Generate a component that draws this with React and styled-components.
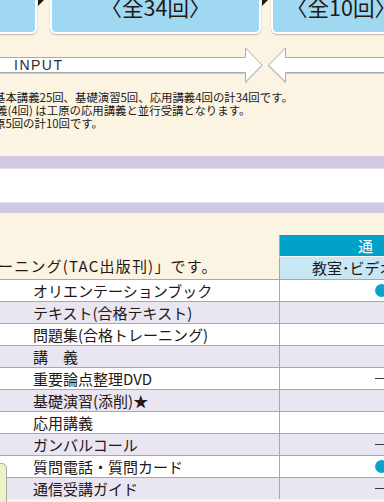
import React from "react";
import styled, { createGlobalStyle } from "styled-components";

const Global = createGlobalStyle`
  html, body { margin: 0; padding: 0; }
  body {
    width: 384px; height: 502px; overflow: hidden;
    background: #fcf4e3;
    font-family: "Noto Sans CJK JP", "Noto Sans", sans-serif;
    color: #231815;
  }
`;

const Page = styled.div`
  position: relative;
  width: 384px;
  height: 502px;
  overflow: hidden;
  background: #fcf4e3;
`;

const TopRow = styled.div`
  display: flex;
  align-items: flex-start;
  height: 34px;
`;

const StepBox = styled.div`
  flex: 0 0 ${(p) => p.$w}px;
  margin-left: ${(p) => p.$ml || 0}px;
  height: 34px;
  box-sizing: border-box;
  background: #a0d8f2;
  border: 2px solid #fff;
  border-top: none;
  border-radius: 0 0 6px 6px;
  box-shadow: 0 1px 1.5px rgba(0, 0, 0, 0.25);
  display: flex;
  justify-content: center;
  align-items: flex-start;
  overflow: hidden;
`;

const StepText = styled.span`
  font-size: 21.5px;
  line-height: 21px;
  margin-top: -4px;
  color: #231815;
  white-space: nowrap;
`;

const Connector = styled.div`
  flex: 0 0 ${(p) => p.$w}px;
  height: 34px;
  display: flex;
  justify-content: flex-start;
`;

const ArrowRow = styled.div`
  position: relative;
  height: 42px;
  margin-top: 10px;
`;

const ArrowLabel = styled.span`
  position: absolute;
  left: 14px;
  top: 13px;
  font-family: "Liberation Sans", Arial, sans-serif;
  font-size: 14px;
  line-height: 16px;
  letter-spacing: 1.5px;
  color: #2e2e2e;
`;

const Notes = styled.div`
  margin-top: 5px;
  font-size: 11.4px;
  line-height: 13px;
  color: #231815;
  white-space: nowrap;
`;

const NoteLine = styled.div`
  margin-left: ${(p) => p.$indent}px;
`;

const Band = styled.div`
  margin-top: 26px;
  display: flex;
  flex-direction: column;
`;

const Stripe = styled.div`
  height: ${(p) => p.$h}px;
  background: ${(p) => p.$bg};
  border-top: ${(p) => (p.$edge ? "1px solid #e4def0" : "none")};
  box-sizing: border-box;
`;

const Table = styled.div`
  margin-top: 22px;
  display: flex;
  flex-direction: column;
`;

const Row = styled.div`
  display: grid;
  grid-template-columns: 279px 1fr;
  height: 22px;
  box-sizing: border-box;
  background: ${(p) => (p.$alt ? "#e9e5f1" : "#ffffff")};
  border-top: 1px solid #a2a9b1;
`;

const HeadRow = styled.div`
  display: grid;
  grid-template-columns: 279px 1fr;
  height: 22px;
`;

const Lead = styled.div`
  font-size: 15px;
  line-height: 22px;
  letter-spacing: 1.2px;
  white-space: nowrap;
  margin-left: -2px;
  margin-top: -2px;
`;

const HeadCell = styled.div`
  border-left: 1px solid #a2a9b1;
  background: ${(p) => p.$bg};
  color: ${(p) => p.$color};
  border-bottom: ${(p) => (p.$split ? "1px solid #fff" : "none")};
  box-sizing: border-box;
  padding-left: ${(p) => p.$pad}px;
  font-size: 15px;
  line-height: 21px;
  white-space: nowrap;
  overflow: hidden;
`;

const Label = styled.div`
  padding-left: 33px;
  font-size: 15px;
  line-height: 21px;
  white-space: nowrap;
  color: #231815;
`;

const MarkCell = styled.div`
  border-left: 1px solid #a2a9b1;
  display: flex;
  align-items: center;
  padding-left: 95px;
`;

const Dot = styled.span`
  flex: 0 0 13px;
  width: 13px;
  height: 13px;
  border-radius: 50%;
  background: #0aa3cf;
`;

const Dash = styled.span`
  flex: 0 0 14px;
  width: 14px;
  height: 1.5px;
  background: #3a3a3a;
`;

const SideTab = styled.div`
  position: absolute;
  left: -2px;
  top: 463px;
  width: 9px;
  height: 50px;
  box-sizing: border-box;
  background: #eef2c8;
  border: 1px solid #a9ad9c;
  border-radius: 0 5px 0 0;
`;

const Tip = () => (
  <svg width="8" height="7" viewBox="0 0 8 7">
    <polygon points="1,0 7,0 1,6" fill="#231815" />
  </svg>
);

const rows = [
  { label: "オリエンテーションブック", mark: "dot" },
  { label: "テキスト(合格テキスト)" },
  { label: "問題集(合格トレーニング)" },
  { label: "講　義" },
  { label: "重要論点整理DVD", mark: "dash" },
  { label: "基礎演習(添削)★" },
  { label: "応用講義" },
  { label: "ガンバルコール", mark: "dash" },
  { label: "質問電話・質問カード", mark: "dot" },
  { label: "通信受講ガイド", mark: "dash" },
];

export default function App() {
  return (
    <Page>
      <Global />
      <TopRow>
        <StepBox $w={57} $ml={-20} />
        <Connector $w={13}>
          <Tip />
        </Connector>
        <StepBox $w={211}>
          <StepText>〈全34回〉</StepText>
        </StepBox>
        <Connector $w={10}>
          <Tip />
        </Connector>
        <StepBox $w={140}>
          <StepText>〈全10回〉</StepText>
        </StepBox>
      </TopRow>

      <ArrowRow>
        <svg width="384" height="42" viewBox="0 0 384 42">
          <defs>
            <filter id="sh" x="-5%" y="-20%" width="110%" height="140%">
              <feDropShadow dx="0" dy="1" stdDeviation="0.6" floodColor="#000" floodOpacity="0.18" />
            </filter>
          </defs>
          <path
            d="M -4 13.5 H 245.5 V 4 L 262 21 L 245.5 38 V 28.5 H -4 Z"
            fill="#fff"
            stroke="#a3abb3"
            strokeWidth="1"
            filter="url(#sh)"
          />
          <path
            d="M 390 13.5 H 285.5 V 4 L 268.5 21 L 285.5 38 V 28.5 H 390 Z"
            fill="#fff"
            stroke="#a3abb3"
            strokeWidth="1"
            filter="url(#sh)"
          />
        </svg>
        <ArrowLabel>INPUT</ArrowLabel>
      </ArrowRow>

      <Notes>
        <NoteLine $indent={-6}>基本講義25回、基礎演習5回、応用講義4回の計34回です。</NoteLine>
        <NoteLine $indent={-4}>義(4回) は工原の応用講義と並行受講となります。</NoteLine>
        <NoteLine $indent={-6}>原5回の計10回です。</NoteLine>
      </Notes>

      <Band>
        <Stripe $h={12} $bg="#d1c9e2" />
        <Stripe $h={34} $bg="#ffffff" $edge />
        <Stripe $h={11} $bg="#d1c9e2" $edge />
      </Band>

      <Table>
        <HeadRow>
          <div />
          <HeadCell $bg="#00a2c9" $color="#fff" $pad={78} $split>
            通　信
          </HeadCell>
        </HeadRow>
        <HeadRow>
          <Lead>ーニング(TAC出版刊)」です。</Lead>
          <HeadCell $bg="#c6e7f3" $color="#231815" $pad={32}>
            教室･ビデオブース講座
          </HeadCell>
        </HeadRow>
        {rows.map((r, i) => (
          <Row key={r.label} $alt={i % 2 === 1}>
            <Label>{r.label}</Label>
            <MarkCell>
              {r.mark === "dot" && <Dot />}
              {r.mark === "dash" && <Dash />}
            </MarkCell>
          </Row>
        ))}
      </Table>
      <SideTab />
    </Page>
  );
}
